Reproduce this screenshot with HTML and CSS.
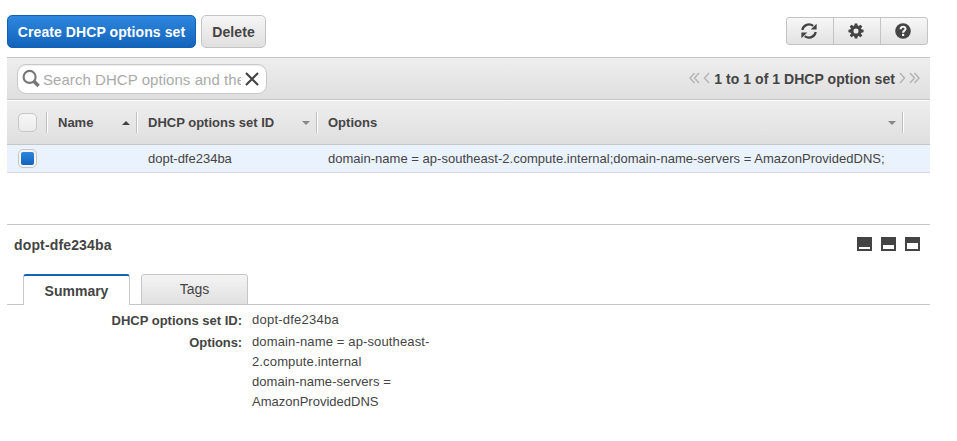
FILE: index.html
```html
<!DOCTYPE html>
<html lang="en">
<head>
<meta charset="utf-8">
<title>DHCP options sets</title>
<link rel="stylesheet" href="styles.css">
</head>
<body>
<main class="console">
  <header class="toolbar">
    <button class="btn btn-primary"><span>Create DHCP options set</span></button>
    <button class="btn btn-delete"><span>Delete</span></button>
    <div class="icon-group">
      <button class="icon-btn" aria-label="Refresh">
        <svg width="16" height="16" viewBox="0 0 16 16"><path d="M1.3 7A6.8 6.8 0 0 1 12.2 2.8" fill="none" stroke="#444" stroke-width="2.3"/><path d="M15.6.7V6.6H9.7z" fill="#444"/><path d="M14.7 9A6.8 6.8 0 0 1 3.8 13.2" fill="none" stroke="#444" stroke-width="2.3"/><path d="M.4 15.3V9.4H6.3z" fill="#444"/></svg>
      </button>
      <button class="icon-btn" aria-label="Settings">
        <svg width="16" height="16" viewBox="0 0 16 16"><g fill="#444"><path id="t" d="M6.3 3 6.7.4H9.3L9.7 3zM6.3 13 6.7 15.6H9.3L9.7 13z"/><use href="#t" transform="rotate(45 8 8)"/><use href="#t" transform="rotate(90 8 8)"/><use href="#t" transform="rotate(135 8 8)"/></g><circle cx="8" cy="8" r="4.1" fill="none" stroke="#444" stroke-width="3.1"/></svg>
      </button>
      <button class="icon-btn" aria-label="Help">
        <svg width="16" height="16" viewBox="0 0 16 16"><circle cx="8" cy="8" r="7.8" fill="#444"/><path d="M5.6 6.2C5.7 2.9 10.7 3 10.5 6 10.4 7.7 8.1 7.7 8.1 9.7" fill="none" stroke="#f4f4f4" stroke-width="2.1"/><path d="M7 10.8H9.2V13H7z" fill="#f4f4f4"/></svg>
      </button>
    </div>
  </header>

  <section class="filter-bar">
    <div class="search">
      <svg class="search-icon" width="19" height="19" viewBox="0 0 19 19"><circle cx="7.6" cy="7.9" r="6" fill="none" stroke="#777" stroke-width="2.1"/><path d="M11.8 12.2 16.6 17" stroke="#777" stroke-width="3.5"/></svg>
      <span class="placeholder"><span>Search DHCP options and their</span></span>
      <svg class="clear-icon" width="14" height="14" viewBox="0 0 14 14"><path d="M1 1 13 13M13 1 1 13" stroke="#444" stroke-width="2.2"/></svg>
    </div>
    <div class="pager">
      <svg width="21" height="12" viewBox="0 0 21 12"><path d="M5.5 1 1 6 5.5 11M10 1 5.5 6 10 11M20 1 15.5 6 20 11" fill="none" stroke="#b5b5b5" stroke-width="1.5"/></svg>
      <strong>1 to 1 of 1 DHCP option set</strong>
      <svg width="21" height="12" viewBox="0 0 21 12"><path d="M1 1 5.5 6 1 11M11 1 15.5 6 11 11M15.5 1 20 6 15.5 11" fill="none" stroke="#b5b5b5" stroke-width="1.5"/></svg>
    </div>
  </section>

  <section class="grid">
    <div class="row head">
      <div class="cell check"><span class="checkbox"></span></div>
      <div class="cell"><span>Name</span><i class="sort up"></i></div>
      <div class="cell"><span>DHCP options set ID</span><i class="sort"></i></div>
      <div class="cell"><span>Options</span><i class="sort"></i></div>
    </div>
    <div class="row data">
      <div class="cell check"><span class="checkbox on"></span></div>
      <div class="cell"></div>
      <div class="cell"><span>dopt-dfe234ba</span></div>
      <div class="cell"><span class="option-list">domain-name = ap-southeast-2.compute.internal;domain-name-servers = AmazonProvidedDNS;</span></div>
    </div>
  </section>

  <section class="details">
    <div class="details-head">
      <h2>dopt-dfe234ba</h2>
      <div class="panes"><i class="pane low"></i><i class="pane mid"></i><i class="pane full"></i></div>
    </div>
    <nav class="tabs">
      <a class="tab active"><span>Summary</span></a>
      <a class="tab"><span>Tags</span></a>
    </nav>
    <dl>
      <dt><span>DHCP options set ID:</span></dt>
      <dd><span class="set-id">dopt-dfe234ba</span></dd>
      <dt><span class="options-label">Options:</span></dt>
      <dd><span class="domain">domain-name = ap-southeast-</span><br><span class="domain">2.compute.internal</span><br><span class="servers">domain-name-servers =</span><br><span>AmazonProvidedDNS</span></dd>
    </dl>
  </section>
</main>
</body>
</html>
```
FILE: styles.css
```css
* { box-sizing: border-box; }
body {
  margin: 0;
  background: #fff;
  color: #444;
  font: 13px/20px "Liberation Sans", Arial, sans-serif;
}
button { font: inherit; color: inherit; padding: 0; margin: 0; }
span { white-space: nowrap; }
svg { display: block; flex: none; }
.console { width: 923px; margin-left: 7px; padding-top: 15px; }

.toolbar { display: flex; height: 42px; align-items: flex-start; }
.btn {
  height: 33px;
  border: 1px solid #c4c4c4;
  border-radius: 5px;
  background: linear-gradient(#f5f5f5, #e0e0e0);
  font-size: 14px;
  font-weight: bold;
}
.btn-primary {
  width: 189px;
  border-color: #1261b5;
  background: linear-gradient(#2f86de, #1264ba);
  color: #fff;
  letter-spacing: 0.08px;
}
.btn-delete { width: 65px; margin-left: 5px; letter-spacing: 0.1px; }
.icon-group {
  display: flex;
  width: 142px;
  height: 28px;
  margin: 2px 2px 0 auto;
  border: 1px solid #c4c4c4;
  border-radius: 3px;
  background: linear-gradient(#f7f7f7, #e2e2e2);
}
.icon-btn {
  display: flex;
  flex: 1;
  align-items: center;
  justify-content: center;
  padding-right: 2px;
  border: 0;
  background: none;
}
.icon-btn + .icon-btn { border-left: 1px solid #c4c4c4; }

.filter-bar {
  display: flex;
  align-items: center;
  justify-content: space-between;
  height: 43px;
  padding: 0 10px;
  border-top: 1px solid #c6c6c6;
  border-bottom: 1px solid #c6c6c6;
  background: linear-gradient(#eee, #dfdfdf);
}
.search {
  display: flex;
  align-items: center;
  width: 250px;
  height: 30px;
  padding-left: 4px;
  border: 1px solid #c8c8c8;
  border-radius: 9px;
  background: #fff;
  box-shadow: inset 0 1px 1px #eee;
}
.placeholder {
  width: 198px;
  margin: 2px 4px 0 2px;
  overflow: hidden;
  color: #aaa;
  font-size: 15px;
  letter-spacing: 0.05px;
}
.pager { display: flex; align-items: center; gap: 4px; font-size: 14px; }
.pager strong { letter-spacing: 0.05px; }
.pager svg { margin-top: -2px; }

.row {
  display: grid;
  grid-template-columns: 40px 90px 180px 586px;
}
.head {
  height: 45px;
  align-items: center;
  border-top: 1px solid #fff;
  border-bottom: 1px solid #c6c6c6;
  background: linear-gradient(#eee, #dfdfdf);
  font-weight: bold;
}
.cell { display: flex; align-items: center; padding-left: 11px; }
.head .cell {
  height: 21px;
  justify-content: space-between;
  padding-right: 6px;
  border-right: 1px solid #bfbfbf;
  box-shadow: 1px 0 #fff;
}
.data {
  height: 28px;
  border-bottom: 1px solid #d5d9df;
  background: #eaf2fe;
}
.option-list { letter-spacing: 0.02px; }
.checkbox {
  width: 19px;
  height: 19px;
  flex: none;
  border: 1px solid #c6c6c6;
  border-radius: 5px;
  background: linear-gradient(#f6f6f6, #ececec);
}
.checkbox.on {
  display: flex;
  align-items: center;
  justify-content: center;
  background: #f4f4f4;
}
.checkbox.on::before {
  content: "";
  width: 13px;
  height: 13px;
  border-radius: 2px;
  background: linear-gradient(#2f86de, #1264ba);
}
.sort {
  border: 4px solid transparent;
  border-top-color: #888;
  border-bottom: 0;
}
.sort.up { border-top: 0; border-bottom: 4px solid #444; }

.details { margin-top: 51px; border-top: 1px solid #c6c6c6; }
.details-head {
  display: flex;
  align-items: center;
  justify-content: space-between;
  height: 37px;
  padding: 0 10px 0 7px;
}
h2 {
  margin: 2px 0 0;
  font-size: 14px;
  letter-spacing: 0.15px;
  white-space: nowrap;
}
.panes { display: flex; gap: 9px; }
.pane { width: 15px; height: 14px; border: 2px solid #444; border-top-width: 10px; }
.pane.mid { border-top-width: 8px; }
.pane.full { border-top-width: 6px; }

.tabs {
  display: flex;
  gap: 11px;
  margin-top: 12px;
  height: 31px;
  padding-left: 16px;
  background: linear-gradient(#c6c6c6, #c6c6c6) bottom / 100% 1px no-repeat;
}
.tab {
  width: 107px;
  height: 31px;
  border: 1px solid #c6c6c6;
  border-radius: 3px 3px 0 0;
  background: linear-gradient(#f4f4f4, #e0e0e0);
  font-size: 14px;
  line-height: 29px;
  text-align: center;
}
.active {
  border-top: 2px solid #1264ba;
  border-bottom: 0;
  background: #fff;
  font-weight: bold;
  line-height: 31px;
}
dl {
  display: grid;
  grid-template-columns: 235px 190px;
  column-gap: 10px;
  row-gap: 1px;
  margin: 5px 0 0;
}
dt { padding-top: 1px; font-weight: bold; text-align: right; }
dd { margin: 0; }
.options-label { letter-spacing: -0.1px; }
.set-id { letter-spacing: 0.23px; }
.domain { letter-spacing: 0.14px; }
.servers { letter-spacing: 0.06px; }
```
